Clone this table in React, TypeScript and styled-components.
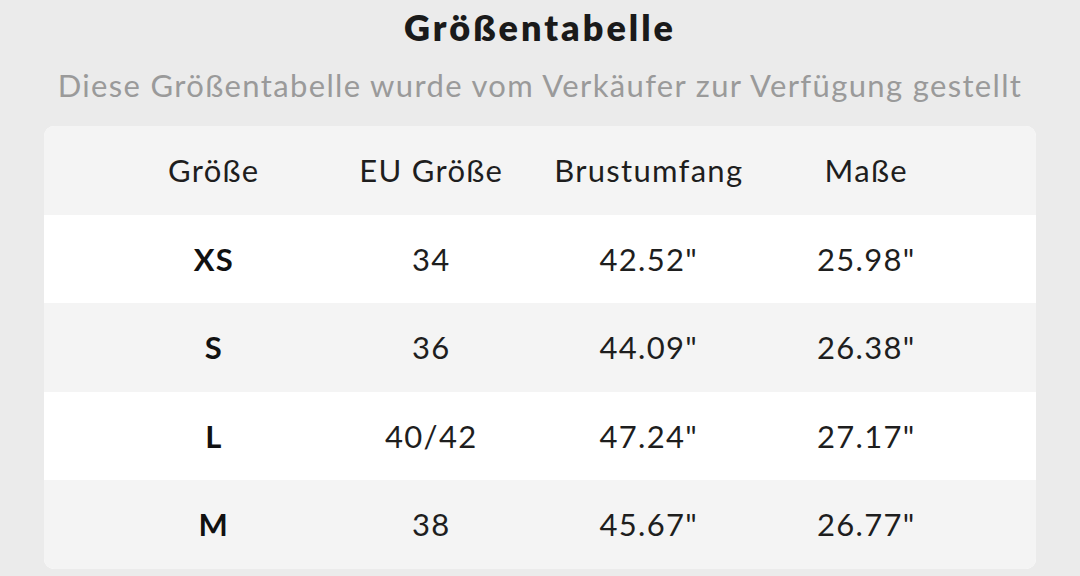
import styled, { createGlobalStyle } from "styled-components";

const GlobalStyle = createGlobalStyle`
  html, body {
    margin: 0;
    padding: 0;
    background: #ebebeb;
  }
  body {
    font-family: Lato, "Noto Sans", sans-serif;
  }
`;

const Page = styled.div`
  width: 1080px;
  height: 576px;
  overflow: hidden;
  display: flex;
  flex-direction: column;
  align-items: center;
  background: #ebebeb;
`;

const Title = styled.h1`
  margin: 5px 0 0;
  font-size: 36px;
  line-height: 44px;
  font-weight: 800;
  letter-spacing: 3px;
  color: #1a1a1a;
`;

const Subtitle = styled.p`
  margin: 16px 0 0;
  font-size: 31px;
  line-height: 40px;
  letter-spacing: 1.35px;
  color: #9a9a9a;
`;

const Card = styled.div`
  margin-top: 21px;
  width: 992px;
  border-radius: 10px;
  overflow: hidden;
  background: #fff;
`;

const Row = styled.div<{ $shade?: boolean }>`
  display: grid;
  grid-template-columns: repeat(4, 217.5px);
  padding-left: 61px;
  height: 88.5px;
  align-items: center;
  background: ${({ $shade }) => ($shade ? "#f4f4f4" : "#fff")};
`;

const Cell = styled.div<{ $bold?: boolean }>`
  text-align: center;
  font-size: 31px;
  letter-spacing: ${({ $bold }) => ($bold ? "1px" : "1.3px")};
  font-weight: ${({ $bold }) => ($bold ? 700 : 400)};
  color: ${({ $bold }) => ($bold ? "#111" : "#1e1e1e")};
`;

const headers = ["Größe", "EU Größe", "Brustumfang", "Maße"];

const rows = [
  ["XS", "34", '42.52"', '25.98"'],
  ["S", "36", '44.09"', '26.38"'],
  ["L", "40/42", '47.24"', '27.17"'],
  ["M", "38", '45.67"', '26.77"'],
];

export default function App() {
  return (
    <>
      <GlobalStyle />
      <Page>
        <Title>Größentabelle</Title>
        <Subtitle>
          Diese Größentabelle wurde vom Verkäufer zur Verfügung gestellt
        </Subtitle>
        <Card>
          <Row $shade>
            {headers.map((h) => (
              <Cell key={h}>{h}</Cell>
            ))}
          </Row>
          {rows.map((r, i) => (
            <Row key={r[0]} $shade={i % 2 === 1}>
              {r.map((v, j) => (
                <Cell key={j} $bold={j === 0}>
                  {v}
                </Cell>
              ))}
            </Row>
          ))}
        </Card>
      </Page>
    </>
  );
}
